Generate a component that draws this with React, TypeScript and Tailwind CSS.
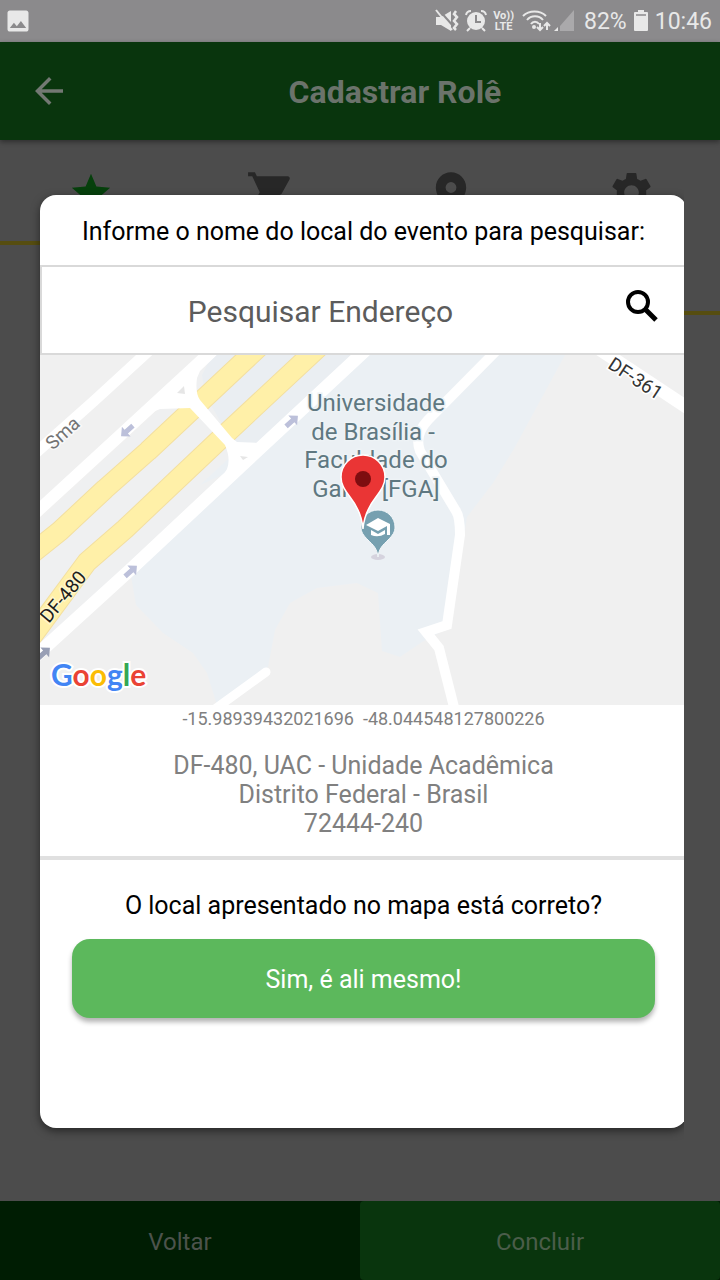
import type { ReactNode } from "react";
import { MdArrowBack, MdImage, MdPlace, MdSettings, MdShoppingCart, MdStar } from "react-icons/md";

function StatusBar() {
  return (
    <div className="flex h-[42px] items-center justify-between bg-[#8b8a8c] pr-2 pl-1 text-[#e8e8e8]">
      <MdImage size={28} aria-hidden="true" />
      <div className="flex items-center gap-[6px]">
        <svg width="24" height="24" viewBox="0 0 24 24" fill="currentColor" aria-hidden="true">
          <path d="M1 8h5l10-6v20L6 16H1z" />
          <path d="M4 1l15 17" stroke="#8b8a8c" strokeWidth="2" />
          <path d="M1 1l16 20" stroke="currentColor" strokeWidth="2" />
          <path
            d="M21 2l-2 3 3 3-3 4 3 3-3 4 2 2"
            fill="none"
            stroke="currentColor"
            strokeWidth="2.5"
          />
        </svg>
        <svg width="22" height="24" viewBox="0 0 22 24" aria-hidden="true">
          <circle cx="11" cy="12" r="9" fill="currentColor" />
          <path d="M11 6v7h5" fill="none" stroke="#8b8a8c" strokeWidth="2" />
          <path
            d="M1 6a5 5 0 0 1 5-4M21 6a5 5 0 0 0-5-4M5 19l-3 3M17 19l3 3"
            fill="none"
            stroke="currentColor"
            strokeWidth="2"
          />
        </svg>
        <div className="text-center text-[11px] leading-[11px] font-bold">
          <div>Vo))</div>
          <div>LTE</div>
        </div>
        <div className="flex items-center">
          <svg width="34" height="24" viewBox="0 0 34 24" fill="none" stroke="currentColor" aria-hidden="true">
            <path d="M3 7c6-6 17-6 23 0M7 11c4-5 12-5 16 0M11 15c2-3 6-3 8 0" strokeWidth="2" />
            <circle cx="14" cy="18" r="2" fill="currentColor" stroke="none" />
            <path d="M20 14v7M17 18l3 3 3-3M27 21v-7M24 17l3-3 3 3" strokeWidth="2" />
          </svg>
          <svg width="20" height="24" viewBox="0 0 20 24" aria-hidden="true">
            <path d="M20 1v21H6V17z" fill="#aaa9ab" />
            <path d="M4 18v4H0z" fill="currentColor" />
          </svg>
        </div>
        <span className="pl-1 text-[23px] leading-none">82%</span>
        <svg width="16" height="24" viewBox="0 0 16 24" fill="currentColor" aria-hidden="true">
          <path d="M5 1h6v2h3a1 1 0 0 1 1 1v17a1 1 0 0 1-1 1H2a1 1 0 0 1-1-1V4a1 1 0 0 1 1-1h3z" />
          <path d="M3 6h10" stroke="#8b8a8c" strokeWidth="1.5" />
        </svg>
        <span className="text-[23px] leading-none">10:46</span>
      </div>
    </div>
  );
}

function Tab({ label, children }: { label: string; children: ReactNode }) {
  return (
    <button type="button" aria-label={label} className="flex flex-1 items-start justify-center pt-7 pl-[2px]">
      {children}
    </button>
  );
}

function Tabs() {
  return (
    <nav className="flex items-start text-[#272727]">
      <div className="flex h-[105px] flex-1 border-b-4 border-[#564d10]">
        <Tab label="Detalhes">
          <MdStar size={46} className="mt-[2px] text-[#06400c]" />
        </Tab>
        <Tab label="Itens">
          <MdShoppingCart size={50} />
        </Tab>
      </div>
      <div className="flex h-[175px] flex-1 border-b-4 border-[#564d10]">
        <Tab label="Local">
          <MdPlace size={52} />
        </Tab>
        <Tab label="Ajustes">
          <MdSettings size={49} />
        </Tab>
      </div>
    </nav>
  );
}

function DirectionArrow({ x, y, angle, color = "#bcc0da" }: { x: number; y: number; angle: number; color?: string }) {
  return (
    <path
      d="M-8-2.5H1V-6.5L8 0L1 6.5V2.5H-8Z"
      fill={color}
      transform={`translate(${x} ${y}) rotate(${angle})`}
    />
  );
}

function LocationMap() {
  return (
    <div className="relative h-[350px] overflow-hidden bg-[#f0f0f0]">
      <svg
        className="block h-full w-full"
        viewBox="0 0 647 350"
        preserveAspectRatio="xMinYMin slice"
        role="img"
        aria-label="Mapa da Faculdade do Gama"
      >
        <rect width="647" height="350" fill="#f0f0f0" />
        <path
          d="M167 0H525L475 92L453 128L427 162L410 272L382 287L360 302L342 296L338 238L317 228L277 233L250 248L235 275L228 312L177 350L167 318L153 298L123 278L96 250L90 215L45 190L193 98Z"
          fill="#ebf0f4"
        />
        <path d="M0 165L167 10H290L160 130L200 112L90 215L0 297Z" fill="#eff0f1" />
        <path d="M165 40L162 20L172 0H320L200 110L193 88Z" fill="#eaeef2" />
        <g fill="none" strokeLinejoin="round">
          <path d="M-10 200L20 176L65 134L108 96L220 -9" stroke="#f3dfa0" strokeWidth="21" />
          <path d="M-10 200L20 176L65 134L108 96L220 -9" stroke="#fff0a8" strokeWidth="19" />
          <path d="M-10 284L47 207L85 174L177 87L280 -9" stroke="#f3dfa0" strokeWidth="21" />
          <path d="M-10 284L47 207L85 174L177 87L280 -9" stroke="#fff0a8" strokeWidth="19" />
          <g stroke="#fff">
            <path d="M-10 103L54 46L114 -9" strokeWidth="11" />
            <path d="M-10 163L87 74L177 -9" strokeWidth="12" />
            <path d="M-10 306L90 215L200 112L330 -9" strokeWidth="13" />
            <path
              d="M461 -9L388 65Q374 80 380 96L416 156Q420 162 420 180L407 270L386 277L399 293L416 360"
              strokeWidth="10"
              strokeLinejoin="miter"
            />
            <path d="M226 317L175 354" strokeWidth="9" strokeLinecap="round" />
            <path d="M553 -10L654 57" strokeWidth="13" />
          </g>
        </g>
        <path
          d="M106 60L120 54L150 53L185 90Q191 104 187 114L180 126L202 114L232 84L220 88L197 87L192 83L160 45Q155 38 157 23L160 16L182 -5H170L134 28Z"
          fill="#fff"
        />
        <path d="M137 38L144 31L145 39ZM200 101L208 102L203 105Z" fill="#e6e6e6" />
        <DirectionArrow x={87} y={76} angle={138} />
        <DirectionArrow x={252} y={66} angle={-42} />
        <DirectionArrow x={91} y={216} angle={-42} />
        <DirectionArrow x={4} y={298} angle={-42} color="#989fb5" />
        <g fontSize="19" textAnchor="middle" stroke="#fff" strokeWidth="3" paintOrder="stroke">
          <text transform="translate(27 83) rotate(-42)" fill="#737373" strokeOpacity="0.6">
            Sma
          </text>
          <text transform="translate(28 246) rotate(-50)" fill="#1d1d1d" strokeOpacity="0.4">
            DF-480
          </text>
          <text transform="translate(592 29) rotate(33)" fill="#333">
            DF-361
          </text>
        </g>
        <g fontSize="24" textAnchor="middle" fill="#5f7881" stroke="#eef3f6" strokeWidth="3" paintOrder="stroke">
          <text x="336" y="56">Universidade</text>
          <text x="333" y="85">de Brasília -</text>
          <text x="336" y="113">Faculdade do</text>
          <text x="336" y="142">Gama [FGA]</text>
        </g>
        <ellipse cx="338" cy="202" rx="7" ry="3" fill="#d5d3de" />
        <path
          d="M338 202C337 193 333 190 328 185C323 180 321 177 321 172A17 17 0 0 1 355 172C355 177 353 180 348 185C343 190 339 193 338 202Z"
          fill="#76a0b0"
          stroke="#f4f8fa"
          strokeWidth="1"
        />
        <path d="M338 163L350 169V180H347V171L338 176L326 170Z" fill="#fff" />
        <path d="M331 175L338 179L345 175V179Q338 183 331 180Z" fill="#fff" />
        <path
          d="M323 174C322 160 317 151 310 142C304 134 301 129 301 122A22 22 0 0 1 345 122C345 129 342 134 336 142C329 151 324 160 323 174Z"
          fill="#ea3535"
          stroke="#fff"
          strokeWidth="1.5"
        />
        <circle cx="323" cy="124" r="8" fill="#7e0d10" />
      </svg>
      <div
        className="absolute bottom-3 left-[11px] text-[30px] leading-[38px] font-bold [-webkit-text-stroke:4px_#fff] [paint-order:stroke_fill]"
        style={{ fontFamily: 'Lato, "Open Sans", sans-serif' }}
      >
        <span className="text-[#4285f4]">G</span>
        <span className="text-[#ea4335]">o</span>
        <span className="text-[#fbbc05]">o</span>
        <span className="text-[#4285f4]">g</span>
        <span className="text-[#34a853]">l</span>
        <span className="text-[#ea4335]">e</span>
      </div>
    </div>
  );
}

function LocationCard() {
  return (
    <section
      role="dialog"
      aria-label="Pesquisar local do evento"
      className="-mr-[3px] flex flex-1 flex-col overflow-hidden rounded-2xl bg-white text-center text-[25px] text-black shadow-[0_3px_8px_rgba(0,0,0,0.5)]"
    >
      <label htmlFor="endereco" className="block pt-[21px] pb-[17px] leading-8">
        Informe o nome do local do evento para pesquisar:
      </label>
      <form className="flex h-[90px] border-2 border-[#d9d9d9]" onSubmit={(e) => e.preventDefault()}>
        <input
          id="endereco"
          type="text"
          placeholder="Pesquisar Endereço"
          className="min-w-0 flex-1 bg-transparent pt-[2px] text-center text-[30px] outline-none placeholder:text-[#5c5c5c]"
        />
        <button type="submit" aria-label="Pesquisar" className="flex w-[86px] items-center justify-center pb-2">
          <svg width="32" height="32" viewBox="0 0 32 32" fill="none" stroke="currentColor" aria-hidden="true">
            <circle cx="12" cy="12" r="10" strokeWidth="4" />
            <path d="M19 19L30 30" strokeWidth="5" />
          </svg>
        </button>
      </form>
      <LocationMap />
      <p className="text-lg leading-7 text-[#808080]">
        -15.98939432021696 &nbsp;-48.044548127800226
      </p>
      <address className="border-b-4 border-[#e0e0e0] py-[18px] leading-[29px] text-[#808080] not-italic">
        DF-480, UAC - Unidade Acadêmica
        <br />
        Distrito Federal - Brasil
        <br />
        72444-240
      </address>
      <p className="pt-[30px] pb-[18px] leading-[31px]">O local apresentado no mapa está correto?</p>
      <button
        type="button"
        className="mx-8 h-[79px] rounded-[18px] bg-[#5cb85c] pt-[2px] text-white shadow-[0_4px_5px_rgba(0,0,0,0.3)]"
      >
        Sim, é ali mesmo!
      </button>
    </section>
  );
}

export default function App() {
  return (
    <div
      className="flex min-h-screen flex-col bg-[#4c4c4c]"
      style={{ fontFamily: 'Roboto, "Noto Sans", sans-serif' }}
    >
      <StatusBar />
      <main className="relative flex flex-1 flex-col">
        <header className="flex h-[98px] items-center bg-[#09350d] pl-7 text-[#737873] shadow-[0_2px_5px_rgba(0,0,0,0.4)]">
          <button type="button" aria-label="Voltar para a tela anterior">
            <MdArrowBack size={42} />
          </button>
          <h1 className="flex-1 pt-[2px] text-center text-[32px] font-bold text-[#6b736b]">Cadastrar Rolê</h1>
        </header>
        <Tabs />
        <footer className="mt-auto flex h-[79px] bg-[#001d03] text-2xl text-[#4c534c]">
          <button type="button" className="flex-1 pt-[2px]">
            Voltar
          </button>
          <button type="button" className="flex-1 rounded bg-[#09350d] pt-[2px] text-[#4b5d4a]">
            Concluir
          </button>
        </footer>
        <div className="absolute inset-0 flex pt-[153px] pr-9 pb-[152px] pl-10">
          <div className="flex min-w-0 flex-1 [clip-path:inset(-20px_0_-20px_-20px)]">
            <LocationCard />
          </div>
        </div>
      </main>
    </div>
  );
}
